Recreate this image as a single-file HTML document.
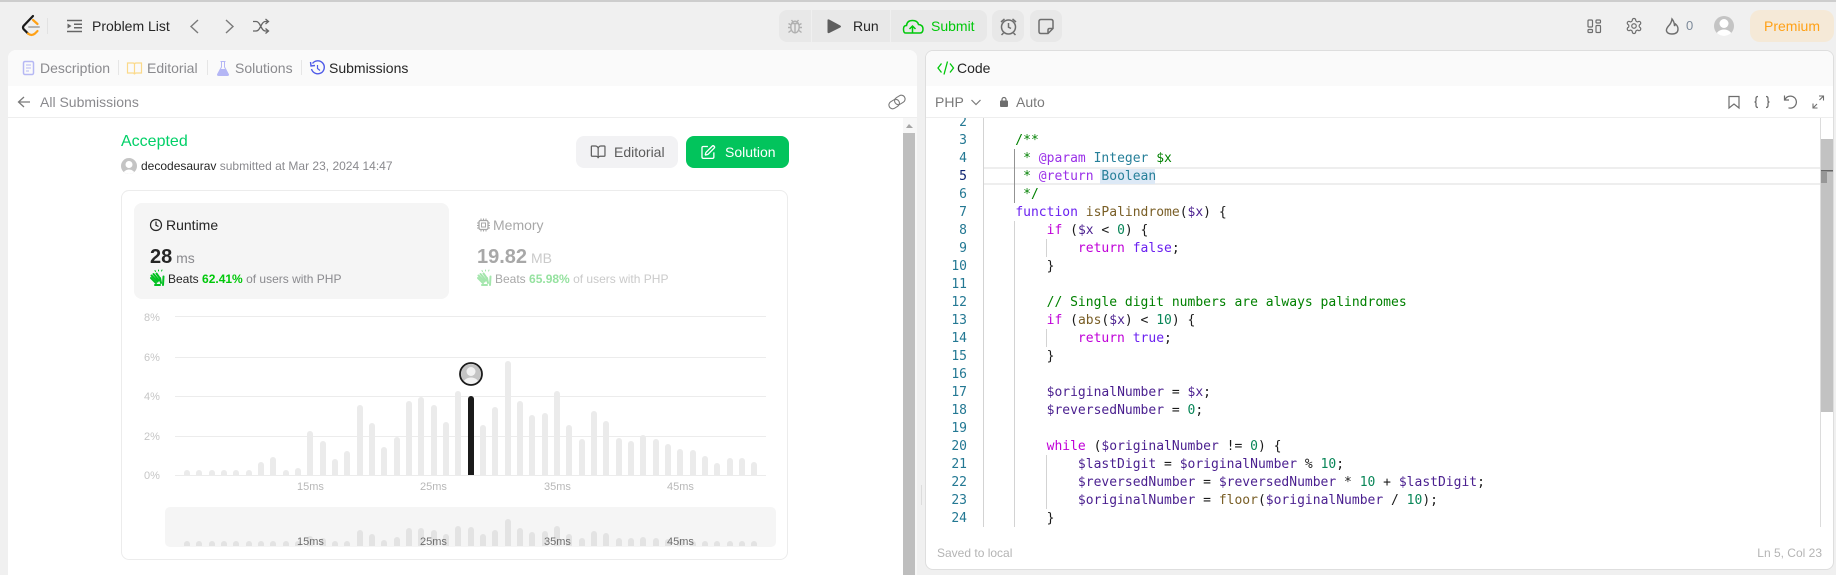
<!DOCTYPE html>
<html style="overflow:hidden;height:575px"><head><meta charset="utf-8"><title>Palindrome Number - Submission</title>
<style>
html,body{margin:0;padding:0}
body{width:1836px;height:575px;overflow:hidden;background:#f0f0f0;position:relative;font-family:"Liberation Sans",Arial,sans-serif;font-size:14px;color:#262626}
.a{position:absolute}
.t{position:absolute;white-space:pre;height:20px;line-height:20px}
.g{color:#8a8a8e}
#code{position:absolute;left:984px;top:113px;font:13px/18px "DejaVu Sans Mono",monospace;white-space:pre;color:#1a1a1a}
#code div{height:18px}
#nums{position:absolute;left:926px;width:41px;top:113px;font:13px/18px "DejaVu Sans Mono",monospace;text-align:right;color:#237893}
#nums div{height:18px}
.k{color:#c000d8}.f{color:#6a20f0}.v{color:#4a1f8f}.n{color:#098658}.c{color:#008000}.d{color:#9a30e8}.y{color:#267f99}.h{color:#795e26}
svg{position:absolute;left:0;top:0;overflow:hidden}
</style></head><body>

<div class="a" style="left:0;top:0;width:1836px;height:2px;background:#cdcdcd"></div>

<!-- Left panel -->
<div class="a" style="left:8px;top:50px;width:909px;height:525px;background:#fff;border-radius:8px 8px 0 0;overflow:hidden">
  <div class="a" style="left:0;top:0;width:909px;height:36px;background:#fafafa"></div>
  <div class="a" style="left:0;top:67px;width:909px;height:1px;background:#eeeeee"></div>
  <div class="a" style="left:895px;top:68px;width:14px;height:457px;background:#f7f7f7"></div>
  <div class="a" style="left:895px;top:83px;width:12px;height:442px;background:#bebebe"></div>
</div>

<!-- Right panel -->
<div class="a" style="left:925px;top:50px;width:907px;height:518px;background:#fff;border:1px solid #dedede;border-radius:8px;overflow:hidden">
  <div class="a" style="left:0;top:0;width:907px;height:35px;background:#fafafa"></div>
  <div class="a" style="left:0;top:66px;width:907px;height:1px;background:#eeeeee"></div>
</div>
<div class="a" style="left:921px;top:485px;width:1px;height:20px;background:#dcdcdc"></div>

<!-- Code highlights -->
<div class="a" style="left:984px;top:167px;width:836px;height:14px;border-top:2px solid #eeeeee;border-bottom:2px solid #eeeeee"></div>
<div class="a" style="left:1100px;top:169px;width:55px;height:15px;background:#dde9f6"></div>

<!-- Header buttons -->
<div class="a" style="left:779px;top:10px;width:32px;height:32px;background:#e8e8e8;border-radius:8px 0 0 8px"></div>
<div class="a" style="left:812px;top:10px;width:78px;height:32px;background:#e8e8e8"></div>
<div class="a" style="left:891px;top:10px;width:96px;height:32px;background:#e8e8e8;border-radius:0 8px 8px 0"></div>
<div class="a" style="left:992px;top:10px;width:32px;height:32px;background:#e8e8e8;border-radius:8px"></div>
<div class="a" style="left:1030px;top:10px;width:32px;height:32px;background:#e8e8e8;border-radius:8px"></div>
<div class="a" style="left:1750px;top:10px;width:84px;height:32px;background:#f5e9d7;border-radius:10px"></div>

<!-- Submission cards -->
<div class="a" style="left:576px;top:136px;width:102px;height:32px;background:#f2f2f4;border-radius:8px"></div>
<div class="a" style="left:686px;top:136px;width:103px;height:32px;background:#02c45c;border-radius:8px"></div>
<div class="a" style="left:121px;top:190px;width:665px;height:368px;border:1px solid #ececec;border-radius:8px;background:#fff"></div>
<div class="a" style="left:134px;top:203px;width:315px;height:96px;background:#f5f5f5;border-radius:8px"></div>
<div class="a" style="left:165px;top:507px;width:611px;height:40px;background:#f5f5f5;border-radius:5px"></div>

<svg width="1836" height="575" viewBox="0 0 1836 575" fill="none">
<defs>
<clipPath id="c1"><rect x="170" y="300" width="600" height="175"/></clipPath>
<clipPath id="c2"><rect x="170" y="500" width="600" height="46"/></clipPath>
<clipPath id="c3"><circle cx="471" cy="374" r="10"/></clipPath>
<clipPath id="c4"><circle cx="129" cy="166" r="8"/></clipPath>
<clipPath id="c5"><circle cx="1724" cy="26" r="10"/></clipPath>
</defs>

<!-- logo -->
<path d="M33 16 L23.500 26 Q22.500 27.500 23.500 29 L28 33.500" stroke="#1a1a1a" stroke-width="2.200" stroke-linecap="round"/>
<path d="M28 33.500 Q31.500 36.500 35 33.500 L37.500 31" stroke="#ffa116" stroke-width="2.200" stroke-linecap="round"/>
<path d="M33 20 L37.500 24" stroke="#ffa116" stroke-width="2.200" stroke-linecap="round"/>
<path d="M29 27 H39" stroke="#b3b3b3" stroke-width="2" stroke-linecap="round"/>
<path d="M47.500 18 V34" stroke="#e2e2e2"/>
<!-- list icon -->
<path d="M67 20.500 H82 M74 24.200 H82 M74 27.800 H82 M67 31.500 H82" stroke="#666" stroke-width="1.500"/>
<path d="M67.500 23.500 L71.500 26 L67.500 28.500 Z" fill="#666"/>
<path d="M198 20 L191 26.500 L198 33" stroke="#7a7a7a" stroke-width="1.400"/>
<path d="M226 20 L233 26.500 L226 33" stroke="#7a7a7a" stroke-width="1.400"/>
<!-- shuffle -->
<path d="M253 21.500 H256 Q258 21.500 259.500 24 L262 28.500 Q263.500 31 265.500 31 H268 M253 31 H256 Q258 31 259.500 28.500 L262 24 Q263.500 21.500 265.500 21.500 H268 M265.500 19 L268.500 21.500 L265.500 24 M265.500 28.500 L268.500 31 L265.500 33.500" stroke="#666" stroke-width="1.300"/>
<!-- tab icons -->
<rect x="23.500" y="61.500" width="10" height="13" rx="1.500" stroke="#b6b8f4" stroke-width="1.500"/>
<path d="M26 65 H31 M26 68 H31 M26 71 H29" stroke="#b6b8f4" stroke-width="1"/>
<path d="M127.500 63 H133 Q134.500 63 134.500 64.500 V74.500 Q134.500 73 133 73 H127.500 Z M141.500 63 H136 Q134.500 63 134.500 64.500 V74.500 Q134.500 73 136 73 H141.500 Z" stroke="#fbd98a" stroke-width="1.200"/>
<path d="M220.500 61.500 H225.500 M221.500 61.500 V67 L217.500 74.500 Q217.500 75.500 218.500 75.500 H227.500 Q228.500 75.500 228.500 74.500 L224.500 67 V61.500" stroke="#b4b6f5" stroke-width="1"/>
<path d="M220 69 H226 L228.500 74.500 Q228.500 75.500 227.500 75.500 H218.500 Q217.500 75.500 217.500 74.500 Z" fill="#b4b6f5"/>
<path d="M312.500 63.500 A6.500 6.500 0 1 1 311.500 69" stroke="#4f5be8" stroke-width="1.400"/>
<path d="M310.500 62 L311 66 L315 65.500" stroke="#4f5be8" stroke-width="1.400"/>
<path d="M317.500 65 V68.500 L320 70.500" stroke="#4f5be8" stroke-width="1.200"/>
<path d="M30 102 H19 M24 97 L18.500 102 L24 107" stroke="#7a7a7a" stroke-width="1.300"/>
<!-- link -->
<g stroke="#7a7a7a" stroke-width="1.100" transform="rotate(-32 897 102)"><rect x="888" y="98.500" width="11" height="7.500" rx="3.700"/><rect x="895" y="98" width="11" height="7.500" rx="3.700"/></g>
<!-- scroll arrow -->
<path d="M906 128 L909 124 L913 128 Z" fill="#a5a5a5"/>
<!-- top centre icons -->
<g stroke="#b0b0b0" stroke-width="1.400"><ellipse cx="795" cy="27" rx="4.200" ry="5.800"/><path d="M791 23.500 H799 M795 23 V32.500 M791.500 20 L793.500 22.500 M798.500 20 L796.500 22.500 M788.500 23.500 L791 25 M801.500 23.500 L799 25 M788 27.500 H791 M802 27.500 H799 M788.500 32.500 L791 30.500 M801.500 32.500 L799 30.500"/></g>
<path d="M828.500 20 Q828 19.500 828 20.500 V32 Q828 33 829 32.500 L840 27 Q841 26.500 840 26 L829 20 Z" fill="#5e5e5e" stroke="#5e5e5e"/>
<path d="M908.500 33 H905.500 Q903.500 33 903.500 29 Q903.500 25.500 906.500 25.500 Q907 20.500 912.500 20.500 Q917.500 20.500 918.500 24.500 Q923 25 923 29 Q923 33 920 33 H916 M912.500 33 V26.500 M909.500 29 L912.500 26 L915.500 29 M908 33 H917" stroke="#00c80a" stroke-width="1.500"/>
<circle cx="1008.500" cy="27" r="7" stroke="#6e6e6e" stroke-width="1.500"/>
<path d="M1008.500 23 V27.200 L1011 28.500 M1001 22 L1004.500 19 M1016 22 L1012.500 19 M1003.500 33 L1001.500 35 M1013.500 33 L1015.500 35" stroke="#6e6e6e" stroke-width="1.500"/>
<path d="M1041 19.500 H1051 Q1053 19.500 1053 21.500 V28.500 L1048 33.500 H1041 Q1039 33.500 1039 31.500 V21.500 Q1039 19.500 1041 19.500 Z M1053 28.500 H1049.500 Q1048 28.500 1048 30 V33.500" stroke="#6e6e6e" stroke-width="1.500"/>
<!-- code tab icon -->
<path d="M941.500 63.500 L938 68 L941.500 72.500 M950 63.500 L953.500 68 L950 72.500 M947.500 61.500 L944 74.500" stroke="#00c80a" stroke-width="1.300"/>
<!-- top right -->
<g stroke="#6e6e6e" stroke-width="1.200"><rect x="1588" y="20" width="4.500" height="7" rx="1"/><rect x="1588" y="29.500" width="4.500" height="3" rx="1"/><rect x="1596" y="20" width="4.500" height="3" rx="1"/><rect x="1596" y="25.500" width="4.500" height="7" rx="1"/></g>
<g transform="translate(1625 17) scale(.75)" stroke="#6e6e6e" stroke-width="1.600"><path d="M12.220 2h-.44a2 2 0 0 0-2 2v.18a2 2 0 0 1-1 1.730l-.43.25a2 2 0 0 1-2 0l-.15-.08a2 2 0 0 0-2.730.73l-.22.38a2 2 0 0 0 .73 2.730l.15.1a2 2 0 0 1 1 1.720v.51a2 2 0 0 1-1 1.740l-.15.09a2 2 0 0 0-.73 2.730l.22.38a2 2 0 0 0 2.730.73l.15-.08a2 2 0 0 1 2 0l.43.25a2 2 0 0 1 1 1.730V20a2 2 0 0 0 2 2h.44a2 2 0 0 0 2-2v-.18a2 2 0 0 1 1-1.730l.43-.25a2 2 0 0 1 2 0l.15.08a2 2 0 0 0 2.730-.73l.22-.39a2 2 0 0 0-.73-2.730l-.15-.08a2 2 0 0 1-1-1.740v-.5a2 2 0 0 1 1-1.740l.15-.09a2 2 0 0 0 .73-2.730l-.22-.38a2 2 0 0 0-2.730-.73l-.15.08a2 2 0 0 1-2 0l-.43-.25a2 2 0 0 1-1-1.730V4a2 2 0 0 0-2-2z"/><circle cx="12" cy="12" r="3"/></g>
<path d="M1672 19 Q1671.500 23 1668.500 26 Q1666 29 1666.500 31 Q1667.500 34 1672 34 Q1678 34 1678 29 Q1678 26 1675.500 24 L1674.500 26 Q1674.500 22 1672 19 Z" stroke="#6e6e6e" stroke-width="1.400"/>
<circle cx="1724" cy="26" r="10" fill="#c4c4c4"/>
<g clip-path="url(#c5)" fill="#fff"><circle cx="1724" cy="23.500" r="4.500"/><ellipse cx="1724" cy="36" rx="8" ry="6.500"/></g>
<!-- editor toolbar -->
<path d="M971.500 100 L976 104.500 L980.500 100" stroke="#7a7a7a" stroke-width="1.200"/>
<rect x="1000" y="100.500" width="8" height="6.500" rx="1" fill="#6e6e6e"/>
<path d="M1002 101 V99.500 A2 2 0 0 1 1006 99.500 V101" stroke="#6e6e6e" stroke-width="1.200"/>
<path d="M1729 96.500 H1739 V108 L1734 104 L1729 108 Z" stroke="#6e6e6e" stroke-width="1.200"/>
<path d="M1758 96.500 Q1756 96.500 1756 98.500 V100.500 Q1756 102 1754.500 102 Q1756 102 1756 103.500 V105.500 Q1756 107.500 1758 107.500 M1766 96.500 Q1768 96.500 1768 98.500 V100.500 Q1768 102 1769.500 102 Q1768 102 1768 103.500 V105.500 Q1768 107.500 1766 107.500" stroke="#6e6e6e" stroke-width="1.300"/>
<path d="M1785 99.500 A6 6 0 1 1 1788.500 107.800 M1784.500 95.500 V100 H1789" stroke="#6e6e6e" stroke-width="1.200"/>
<path d="M1813 103.500 V108 H1817.500 M1813 108 L1817 104 M1823.500 100.500 V96 H1819 M1823.500 96 L1819.500 100" stroke="#6e6e6e" stroke-width="1.100"/>
<!-- right scrollbar + guides -->
<path d="M1820.500 118 V527" stroke="#dcdcdc"/>
<rect x="1821" y="139" width="12" height="273" fill="#c2c2c2"/>
<rect x="1821" y="170" width="12" height="1.500" fill="#666"/>
<rect x="1821" y="172" width="6" height="11" fill="#979797"/>
<path d="M983.500 118 V527" stroke="#d3d3d3"/>
<path d="M1014.500 149 V203" stroke="#939393"/>
<path d="M1014.500 221 V527 M1046.500 239 V257 M1046.500 329 V347 M1046.500 455 V509" stroke="#d3d3d3"/>
<!-- submission icons -->
<circle cx="129" cy="166" r="8" fill="#c4c4c4"/>
<g clip-path="url(#c4)" fill="#fff"><circle cx="129" cy="164.500" r="3.500"/><ellipse cx="129" cy="174.500" rx="6" ry="5"/></g>
<g transform="translate(590 144) scale(.68)" stroke="#5e5e5e" stroke-width="1.800"><path d="M12 7v14 M3 18a1 1 0 0 1-1-1V4a1 1 0 0 1 1-1h5a4 4 0 0 1 4 4 4 4 0 0 1 4-4h5a1 1 0 0 1 1 1v13a1 1 0 0 1-1 1h-6a3 3 0 0 0-3 3 3 3 0 0 0-3-3z"/></g>
<g transform="translate(700 144.500) scale(.66)" stroke="#fff" stroke-width="2"><path d="M12 3H5a2 2 0 0 0-2 2v14a2 2 0 0 0 2 2h14a2 2 0 0 0 2-2v-7 M18.375 2.625a1 1 0 0 1 3 3l-9.013 9.014a2 2 0 0 1-.853.505l-2.873.84a.5.5 0 0 1-.62-.62l.84-2.873a2 2 0 0 1 .506-.852z"/></g>
<circle cx="156" cy="225" r="5.500" stroke="#262626" stroke-width="1.200"/>
<path d="M156 221.500 V225.300 L158.500 226.500" stroke="#262626" stroke-width="1.200"/>
<g stroke="#00c020" stroke-width="2" stroke-linecap="round"><path d="M151 278 L156 283 M151.500 275.500 L157.500 281.500 M153.500 274 L159 280.500 M156.500 273.500 L160 278.500 M155 285 L160 285 M160 278 L161 283 M163.500 276.500 L163 285"/><path d="M158.500 271 L158.500 270 M161.500 271 L162 270 M155.500 271.500 L155 270.500" stroke-width="1"/></g>
<g stroke="#a4e6ad" stroke-width="2" stroke-linecap="round"><path d="M478 278 L483 283 M478.500 275.500 L484.500 281.500 M480.500 274 L486 280.500 M483.500 273.500 L487 278.500 M482 285 L487 285 M487 278 L488 283 M490.500 276.500 L490 285"/><path d="M485.500 271 L485.500 270 M488.500 271 L489 270 M482.500 271.500 L482 270.500" stroke-width="1"/></g>
<rect x="479" y="220.500" width="9" height="9" rx="1.500" stroke="#a8a8a8" stroke-width="1.300"/>
<rect x="481.500" y="223" width="4" height="4" stroke="#a8a8a8"/>
<path d="M481 218.500 V220 M483.500 218.500 V220 M486 218.500 V220 M481 230 V231.500 M483.500 230 V231.500 M486 230 V231.500 M477 223 H478.500 M477 225.500 H478.500 M477 228 H478.500 M488.500 223 H490 M488.500 225.500 H490 M488.500 228 H490" stroke="#a8a8a8"/>
<!-- chart grid -->
<path d="M175 316.500 H766 M175 357.500 H766 M175 396.500 H766 M175 436.500 H766 M175 475.500 H766" stroke="#ececec"/>
<g clip-path="url(#c1)" stroke-width="6" stroke-linecap="round">
<path stroke="#ebebeb" d="M187 473V480M199 473V480M212 473V480M224 473V480M236 473V480M249 473V480M261 465V480M273 460V480M286 473V480M298 471V480M310 434V480M323 444V480M335 462V480M347 454V480M360 408V480M372 426V480M384 450V480M397 440V480M409 404V480M421 400V480M434 408V480M446 425V480M458 394V480M483 428V480M495 410V480M508 364V480M520 404V480M532 418V480M545 416V480M557 394V480M569 428V480M582 442V480M594 414V480M606 424V480M619 441V480M631 444V480M643 438V480M656 442V480M668 447V480M680 452V480M693 453V480M705 459V480M717 466V480M730 461V480M742 461V480M754 465V480"/>
<path stroke="#1a1a1a" d="M471 399V480"/>
</g>
<g clip-path="url(#c2)" stroke-width="6" stroke-linecap="round">
<path stroke="#e3e3e3" d="M187 544V550M199 544V550M212 544V550M224 544V550M236 544V550M249 544V550M261 544V550M273 544V550M286 544V550M298 544V550M310 539V550M323 541V550M335 544V550M347 544V550M360 533V550M372 537V550M384 543V550M397 540V550M409 531V550M421 531V550M434 533V550M446 537V550M458 529V550M471 530V550M483 537V550M495 533V550M508 522V550M520 531V550M532 535V550M545 534V550M557 529V550M569 537V550M582 541V550M594 534V550M606 536V550M619 541V550M631 541V550M643 540V550M656 541V550M668 542V550M680 542V550M693 544V550M705 544V550M717 544V550M730 544V550M742 544V550M754 544V550"/>
</g>
<circle cx="471" cy="374" r="10" fill="#c4c4c4"/>
<g clip-path="url(#c3)" fill="#f2f2f2"><circle cx="471" cy="371.500" r="4.500"/><ellipse cx="471" cy="384" rx="8" ry="6.500"/></g>
<circle cx="471" cy="374" r="11" stroke="#1a1a1a" stroke-width="1.800"/>
</svg>

<!-- Header text -->
<div class="t" style="left:92px;top:16px">Problem List</div>
<div class="t" style="left:853px;top:16px">Run</div>
<div class="t" style="left:931px;top:16px;color:#00c80a">Submit</div>
<div class="t" style="left:1686px;top:16px;color:#7d8a9a;font-size:13px">0</div>
<div class="t" style="left:1764px;top:16px;color:#ffa116">Premium</div>

<!-- Tabs -->
<div class="t g" style="left:40px;top:58px">Description</div>
<div class="a" style="left:118px;top:60px;width:1px;height:15px;background:#e6e6e6"></div>
<div class="t g" style="left:147px;top:58px">Editorial</div>
<div class="a" style="left:207px;top:60px;width:1px;height:15px;background:#e6e6e6"></div>
<div class="t g" style="left:235px;top:58px">Solutions</div>
<div class="a" style="left:301px;top:60px;width:1px;height:15px;background:#e6e6e6"></div>
<div class="t" style="left:329px;top:58px">Submissions</div>
<div class="t g" style="left:40px;top:92px">All Submissions</div>
<div class="t" style="left:957px;top:58px">Code</div>
<div class="t" style="left:935px;top:92px;color:#7a7a7a">PHP</div>
<div class="t" style="left:1016px;top:92px;color:#7a7a7a">Auto</div>

<!-- Submission text -->
<div class="t" style="left:121px;top:132px;font-size:16px;color:#02d068">Accepted</div>
<div class="t" style="left:141px;top:156px;font-size:12px"><span>decodesaurav</span> <span class="g">submitted at Mar 23, 2024 14:47</span></div>
<div class="t" style="left:614px;top:142px;color:#5c5c5c">Editorial</div>
<div class="t" style="left:725px;top:142px;color:#fff">Solution</div>
<div class="t" style="left:166px;top:215px">Runtime</div>
<div class="t" style="left:150px;top:247px"><span style="font-size:20px;font-weight:bold">28</span><span style="font-size:14px;color:#8a8a8e"> ms</span></div>
<div class="t" style="left:168px;top:269px;font-size:12px">Beats <b style="color:#00c80a">62.41%</b> <span class="g">of users with PHP</span></div>
<div class="t" style="left:493px;top:215px;color:#a8a8a8">Memory</div>
<div class="t" style="left:477px;top:247px"><span style="font-size:20px;font-weight:bold;color:#a8a8a8">19.82</span><span style="font-size:14px;color:#cacaca"> MB</span></div>
<div class="t" style="left:495px;top:269px;font-size:12px;color:#a8a8a8">Beats <b style="color:#96e2a0">65.98%</b> <span style="color:#cacaca">of users with PHP</span></div>

<!-- Chart labels -->
<div class="t" style="left:144px;top:308px;font-size:11px;color:#c6c6c6">8%</div>
<div class="t" style="left:144px;top:348px;font-size:11px;color:#c6c6c6">6%</div>
<div class="t" style="left:144px;top:387px;font-size:11px;color:#c6c6c6">4%</div>
<div class="t" style="left:144px;top:427px;font-size:11px;color:#c6c6c6">2%</div>
<div class="t" style="left:144px;top:466px;font-size:11px;color:#c6c6c6">0%</div>
<div class="t" style="left:297px;top:477px;font-size:11px;color:#b8b8b8">15ms</div>
<div class="t" style="left:420px;top:477px;font-size:11px;color:#b8b8b8">25ms</div>
<div class="t" style="left:544px;top:477px;font-size:11px;color:#b8b8b8">35ms</div>
<div class="t" style="left:667px;top:477px;font-size:11px;color:#b8b8b8">45ms</div>
<div class="t" style="left:297px;top:532px;font-size:11px;color:#6e6e6e">15ms</div>
<div class="t" style="left:420px;top:532px;font-size:11px;color:#6e6e6e">25ms</div>
<div class="t" style="left:544px;top:532px;font-size:11px;color:#6e6e6e">35ms</div>
<div class="t" style="left:667px;top:532px;font-size:11px;color:#6e6e6e">45ms</div>

<!-- Code -->
<div class="a" style="left:926px;top:118px;width:894px;height:409px;overflow:hidden">
<div id="nums" style="left:0;top:-4px"><div>2</div><div>3</div><div>4</div><div style="color:#0b216f">5</div><div>6</div><div>7</div><div>8</div><div>9</div><div>10</div><div>11</div><div>12</div><div>13</div><div>14</div><div>15</div><div>16</div><div>17</div><div>18</div><div>19</div><div>20</div><div>21</div><div>22</div><div>23</div><div>24</div></div>
<div id="code" style="left:58px;top:-4px"><div> </div><div class="c">    /**</div><div class="c">     * <span class="d">@param</span> <span class="y">Integer</span> $x</div><div class="c">     * <span class="d">@return</span> <span class="y">Boolean</span></div><div class="c">     */</div><div>    <span class="f">function</span> <span class="h">isPalindrome</span>(<span class="v">$x</span>) {</div><div>        <span class="k">if</span> (<span class="v">$x</span> &lt; <span class="n">0</span>) {</div><div>            <span class="k">return</span> <span class="f">false</span>;</div><div>        }</div><div> </div><div class="c">        // Single digit numbers are always palindromes</div><div>        <span class="k">if</span> (<span class="h">abs</span>(<span class="v">$x</span>) &lt; <span class="n">10</span>) {</div><div>            <span class="k">return</span> <span class="f">true</span>;</div><div>        }</div><div> </div><div>        <span class="v">$originalNumber</span> = <span class="v">$x</span>;</div><div>        <span class="v">$reversedNumber</span> = <span class="n">0</span>;</div><div> </div><div>        <span class="k">while</span> (<span class="v">$originalNumber</span> != <span class="n">0</span>) {</div><div>            <span class="v">$lastDigit</span> = <span class="v">$originalNumber</span> % <span class="n">10</span>;</div><div>            <span class="v">$reversedNumber</span> = <span class="v">$reversedNumber</span> * <span class="n">10</span> + <span class="v">$lastDigit</span>;</div><div>            <span class="v">$originalNumber</span> = <span class="h">floor</span>(<span class="v">$originalNumber</span> / <span class="n">10</span>);</div><div>        }</div></div>
</div>

<div class="t" style="left:937px;top:543px;font-size:12px;color:#b4b4b4">Saved to local</div>
<div class="t" style="left:1752px;width:70px;text-align:right;top:543px;font-size:12px;color:#b4b4b4">Ln 5, Col 23</div>
</body></html>
